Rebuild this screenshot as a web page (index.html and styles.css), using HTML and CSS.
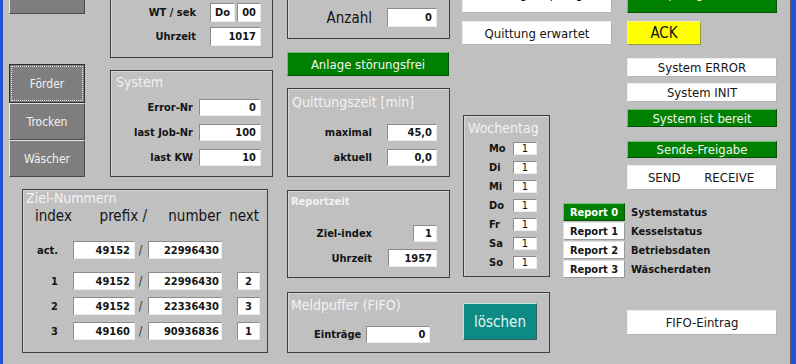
FILE: index.html
```html
<!DOCTYPE html>
<html lang="de">
<head>
<meta charset="utf-8">
<title>Kommunikation</title>
<link rel="stylesheet" href="styles.css">
</head>
<body>
<div class="screen">
  <div class="col-left">
    <div class="left-top">
      <div class="nav">
        <div class="navbtn nav-top"></div>
        <div class="navbtn focus h39">Förder</div>
        <div class="navbtn h37">Trocken</div>
        <div class="navbtn h37">Wäscher</div>
      </div>
      <div class="stack">
        <div class="panel wt">
          <div class="row r19">
            <span class="lbl">WT / sek</span>
            <span class="fld w25 center">Do</span>
            <span class="fld w24 ml2">00</span>
          </div>
          <div class="row r19 mt5">
            <span class="lbl">Uhrzeit</span>
            <span class="fld w51">1017</span>
          </div>
        </div>
        <div class="panel system">
          <div class="ptitle">System</div>
          <div class="srow mt8"><span class="lbl">Error-Nr</span><span class="fld w62">0</span></div>
          <div class="srow mt8"><span class="lbl">last Job-Nr</span><span class="fld w62">100</span></div>
          <div class="srow mt8"><span class="lbl">last KW</span><span class="fld w62">10</span></div>
        </div>
      </div>
    </div>
    <div class="panel ziel">
      <div class="ptitle small14">Ziel-Nummern</div>
      <div class="zhead">
        <span class="zh-index">index</span>
        <span class="zh-prefix">prefix /</span>
        <span class="zh-number">number</span>
        <span class="zh-next">next</span>
      </div>
      <div class="zrow mt16">
        <span class="zlbl">act.</span>
        <span class="fld zpre">49152</span>
        <span class="zslash">/</span>
        <span class="fld znum">22996430</span>
      </div>
      <div class="zrow mt13">
        <span class="zlbl">1</span>
        <span class="fld zpre">49152</span>
        <span class="zslash">/</span>
        <span class="fld znum">22996430</span>
        <span class="fld znext center">2</span>
      </div>
      <div class="zrow mt7">
        <span class="zlbl">2</span>
        <span class="fld zpre">49152</span>
        <span class="zslash">/</span>
        <span class="fld znum">22336430</span>
        <span class="fld znext center">3</span>
      </div>
      <div class="zrow mt7">
        <span class="zlbl">3</span>
        <span class="fld zpre">49160</span>
        <span class="zslash">/</span>
        <span class="fld znum">90936836</span>
        <span class="fld znext center">1</span>
      </div>
    </div>
  </div>

  <div class="col-mid">
    <div class="mid-upper">
      <div class="c1">
        <div class="panel anzahl">
          <div class="row">
            <span class="lbl big">Anzahl</span>
            <span class="fld w50 h19">0</span>
          </div>
        </div>
        <div class="bar green anlage">Anlage störungsfrei</div>
        <div class="panel quitt">
          <div class="ptitle">Quittungszeit [min]</div>
          <div class="qrow mt13"><span class="lbl">maximal</span><span class="fld w50">45,0</span></div>
          <div class="qrow mt8"><span class="lbl">aktuell</span><span class="fld w50">0,0</span></div>
        </div>
        <div class="panel report">
          <div class="ptitle bold11">Reportzeit</div>
          <div class="rrow mt16"><span class="lbl">Ziel-index</span><span class="fld w24 h17">1</span></div>
          <div class="rrow mt7"><span class="lbl">Uhrzeit</span><span class="fld w49 h18">1957</span></div>
        </div>
      </div>

      <div class="c2">
        <div class="top-row">
          <div class="tstack">
            <div class="box white cut"><span class="cut-txt">Quittung empfangen</span></div>
            <div class="box white h24 mt8">Quittung erwartet</div>
          </div>
          <div class="tstack ml15">
            <div class="box green cut"><span class="cut-txt">Report gesendet</span></div>
            <div class="box yellow ack mt8">ACK</div>
          </div>
        </div>
        <div class="lower">
          <div class="panel woche">
            <div class="ptitle">Wochentag</div>
            <div class="wrows">
              <div class="wrow"><span class="wl">Mo</span><span class="fld wbox">1</span></div>
              <div class="wrow"><span class="wl">Di</span><span class="fld wbox">1</span></div>
              <div class="wrow"><span class="wl">Mi</span><span class="fld wbox">1</span></div>
              <div class="wrow"><span class="wl">Do</span><span class="fld wbox">1</span></div>
              <div class="wrow"><span class="wl">Fr</span><span class="fld wbox">1</span></div>
              <div class="wrow"><span class="wl">Sa</span><span class="fld wbox">1</span></div>
              <div class="wrow"><span class="wl">So</span><span class="fld wbox">1</span></div>
            </div>
          </div>
          <div class="rcol">
            <div class="status">
              <div class="box white h19">System ERROR</div>
              <div class="box white h19 mt6">System INIT</div>
              <div class="box green h18 mt7">System ist bereit</div>
              <div class="box green h17 mt14">Sende-Freigabe</div>
              <div class="box white sendrecv mt7"><span>SEND</span><span>RECEIVE</span></div>
            </div>
            <div class="reports">
              <div class="rep"><span class="rbtn on">Report 0</span><span class="rlbl">Systemstatus</span></div>
              <div class="rep"><span class="rbtn">Report 1</span><span class="rlbl">Kesselstatus</span></div>
              <div class="rep"><span class="rbtn">Report 2</span><span class="rlbl">Betriebsdaten</span></div>
              <div class="rep"><span class="rbtn">Report 3</span><span class="rlbl">Wäscherdaten</span></div>
            </div>
          </div>
        </div>
      </div>
    </div>

    <div class="mid-lower">
      <div class="panel meld">
        <div class="meld-left">
          <div class="ptitle">Meldpuffer (FIFO)</div>
          <div class="erow"><span class="lbl">Einträge</span><span class="fld w64 h17">0</span></div>
        </div>
        <div class="loeschen">löschen</div>
      </div>
      <div class="box white fifo">FIFO-Eintrag</div>
    </div>
  </div>
</div>
</body>
</html>
```
FILE: styles.css
```css
* { box-sizing: border-box; }
html, body { margin: 0; padding: 0; }
body {
  width: 796px;
  height: 364px;
  overflow: hidden;
  background: #c0c0c0;
  font-family: "DejaVu Sans Condensed", "Liberation Sans", sans-serif;
  color: #141414;
}
.screen {
  display: flex;
  width: 796px;
  height: 364px;
  overflow: hidden;
  background: #c0c0c0;
  border-left: 3px solid #2350d4;
  border-right: 5px solid #2350d4;
  box-shadow: inset -1px 0 0 #5a5a5a;
}

/* generic */
.mt5 { margin-top: 5px; }
.mt6 { margin-top: 6px; }
.mt7 { margin-top: 7px; }
.mt8 { margin-top: 8px; }
.mt13 { margin-top: 13px; }
.mt14 { margin-top: 14px; }
.mt16 { margin-top: 16px; }
.ml2 { margin-left: 2px; }
.ml15 { margin-left: 15px; }

.panel {
  border: 1px solid #3e3e3e;
  box-shadow: inset 1px 1px 0 #d6d6d6;
}
.ptitle {
  color: #f2f2f2;
  font-size: 14px;
  line-height: 18px;
  padding-left: 4px;
  padding-top: 2px;
  white-space: nowrap;
}
.ptitle.small14 { font-size: 14px; line-height: 15px; padding-top: 1px; padding-left: 3px; }
.ptitle.bold11 { font-size: 11px; font-weight: bold; line-height: 13px; padding-top: 4px; padding-left: 3px; }

.lbl {
  font-size: 11px;
  font-weight: bold;
  white-space: nowrap;
}
.lbl.big { font-size: 15px; font-weight: normal; }

.fld {
  display: flex;
  align-items: center;
  justify-content: flex-end;
  background: #ffffff;
  border-top: 1px solid #8c8c8c;
  border-left: 1px solid #8c8c8c;
  border-right: 1px solid #ececec;
  border-bottom: 1px solid #ececec;
  font-size: 11px;
  font-weight: bold;
  padding-right: 4px;
  height: 17px;
}
.fld.center { justify-content: center; padding-right: 0; }
.w24 { width: 24px; }
.w25 { width: 25px; }
.w49 { width: 49px; }
.w50 { width: 50px; }
.w51 { width: 51px; }
.w62 { width: 62px; }
.w64 { width: 64px; }
.h17 { height: 17px; }
.h18 { height: 18px; }
.h19 { height: 19px; }
.h24 { height: 24px; }

/* left column */
.col-left { width: 277px; flex: none; display: flex; flex-direction: column; }
.left-top { display: flex; }
.nav {
  margin-left: 6px;
  width: 76px;
  margin-top: -23px;
  display: flex;
  flex-direction: column;
}
.navbtn {
  background: #7e7e7e;
  border-top: 1px solid #e4e4e4;
  border-left: 1px solid #e4e4e4;
  border-right: 1px solid #4a4a4a;
  border-bottom: 1px solid #4a4a4a;
  color: #f2f2f2;
  font-size: 12px;
  display: flex;
  align-items: center;
  justify-content: center;
}
.nav-top { height: 37px; margin-bottom: 50px; }
.navbtn.focus {
  border: 1px solid #2e2e2e;
  outline: 1px dotted #e8e8e8;
  outline-offset: -3px;
}
.h39 { height: 39px; }
.h37 { height: 37px; }

.stack { margin-left: 25px; width: 163px; display: flex; flex-direction: column; }
.row { display: flex; align-items: center; justify-content: flex-end; }
.panel.wt {
  margin-top: -10px;
  height: 68px;
  padding: 12px 11px 0 0;
}
.wt .lbl { margin-right: 14px; }
.r19 { height: 19px; }
.wt .fld { height: 19px; }

.panel.system { margin-top: 12px; height: 107px; padding-right: 11px; }
.system .ptitle { padding-left: 5px; padding-top: 2px; }
.srow { display: flex; align-items: center; justify-content: flex-end; height: 17px; }
.srow .lbl { margin-right: 6px; }

.panel.ziel {
  margin-left: 19px;
  margin-top: 12px;
  width: 246px;
  height: 164px;
}
.zhead {
  display: grid;
  grid-template-columns: 67px 57px 75px 40px;
  font-size: 15px;
  line-height: 18px;
  margin-top: 1px;
  white-space: nowrap;
}
.zh-index { padding-left: 12px; }
.zh-prefix { text-align: right; }
.zh-number { text-align: right; padding-right: 1px; }
.zh-next { text-align: right; padding-right: 3px; }
.zrow {
  display: grid;
  grid-template-columns: 35px 77px 13px 74px 38px;
  align-items: center;
  height: 18px;
}
.zrow .fld { height: 18px; }
.zlbl { font-size: 11px; font-weight: bold; text-align: right; }
.zpre { grid-column: 2; margin-left: 15px; width: 62px; }
.zslash { grid-column: 3; text-align: center; font-size: 12px; color: #333; padding-right: 2px; }
.znum { grid-column: 4; padding-right: 2px; }
.znext { grid-column: 5; margin-left: 15px; width: 23px; }

/* middle */
.col-mid { margin-left: 7px; width: 490px; flex: none; display: flex; flex-direction: column; }
.mid-upper { display: flex; height: 278px; }
.c1 { width: 163px; display: flex; flex-direction: column; flex: none; }
.panel.anzahl { margin-top: -12px; height: 51px; padding: 19px 12px 0 0; }
.anzahl .lbl { margin-right: 15px; }

.bar {
  display: flex;
  align-items: center;
  justify-content: center;
  font-size: 13px;
}
.green {
  background: #008000;
  color: #f4f4f4;
  border-top: 1px solid #6cc46c;
  border-left: 1px solid #6cc46c;
  border-right: 1px solid #0b4f0b;
  border-bottom: 1px solid #0b4f0b;
}
.anlage { margin-top: 13px; height: 24px; width: 162px; }

.panel.quitt { margin-top: 12px; height: 89px; padding-right: 12px; }
.quitt .ptitle { padding-top: 4px; }
.qrow { display: flex; align-items: center; justify-content: flex-end; height: 17px; }
.qrow .fld { height: 17px; }
.qrow .lbl { margin-right: 15px; }

.panel.report { margin-top: 13px; height: 88px; padding-right: 12px; }
.rrow { display: flex; align-items: center; height: 18px; }
.rrow .lbl { width: 84px; text-align: right; margin-right: 16px; }
.rrow .fld { margin-left: auto; }

.c2 { margin-left: 12px; width: 315px; display: flex; flex-direction: column; flex: none; }
.top-row { display: flex; }
.tstack { width: 150px; display: flex; flex-direction: column; }
.box {
  display: flex;
  align-items: center;
  justify-content: center;
  font-size: 13px;
  white-space: nowrap;
}
.white {
  background: #ffffff;
  border: 1px solid #ededed;
  border-bottom-color: #b4b4b4;
  border-right-color: #b4b4b4;
}
.yellow {
  background: #ffff00;
  border: 1px solid #f4f4a0;
  border-bottom-color: #9a9a40;
  border-right-color: #9a9a40;
}
.box.cut {
  height: 13px;
  align-items: flex-start;
  overflow: hidden;
  border-top: none;
}
.cut-txt { display: block; line-height: 13px; margin-top: -13px; }
.box.ack { width: 74px; height: 24px; font-size: 15px; }
.lower { display: flex; }
.panel.woche { margin-left: 1px; margin-top: 70px; width: 87px; height: 162px; flex: none; }
.woche .ptitle { padding-left: 4px; padding-top: 3px; }
.wrows { display: flex; flex-direction: column; gap: 6px; margin-top: 5px; }
.wrow { display: flex; align-items: center; height: 13px; }
.wl { width: 49px; padding-left: 25px; font-size: 11px; font-weight: bold; }
.wbox { width: 24px; height: 13px; justify-content: center; padding-right: 0; font-weight: normal; }

.rcol { margin-left: 13px; width: 214px; display: flex; flex-direction: column; }
.status { margin-left: 64px; width: 150px; margin-top: 13px; display: flex; flex-direction: column; }
.sendrecv { height: 25px; justify-content: space-around; padding: 0 10px 0 8px; }
.reports { margin-top: 13px; display: flex; flex-direction: column; gap: 1px; }
.rep { display: flex; align-items: center; height: 18px; }
.rbtn {
  width: 62px;
  height: 18px;
  display: flex;
  align-items: center;
  justify-content: center;
  font-size: 11px;
  font-weight: bold;
  background: #ffffff;
  color: #141414;
  border: 1px solid #e2e2e2;
  border-bottom-color: #9a9a9a;
  border-right-color: #9a9a9a;
}
.rbtn.on {
  background: #008000;
  color: #ffffff;
  border-color: #6cc46c #0b4f0b #0b4f0b #6cc46c;
}
.rlbl { margin-left: 6px; font-size: 11px; font-weight: bold; }

.mid-lower { display: flex; margin-top: 14px; }
.panel.meld { width: 263px; height: 61px; display: flex; flex: none; }
.meld-left { display: flex; flex-direction: column; }
.meld .ptitle { padding-top: 3px; padding-left: 3px; }
.erow { display: flex; align-items: center; margin-top: 12px; padding-left: 26px; }
.erow .lbl { margin-right: 5px; }
.loeschen {
  margin-left: auto;
  margin-right: 12px;
  margin-top: 10px;
  width: 74px;
  height: 37px;
  background: #0c8a84;
  color: #e6f4f4;
  font-size: 15px;
  display: flex;
  align-items: center;
  justify-content: center;
  border-top: 1px solid #b8e8e6;
  border-left: 1px solid #b8e8e6;
  border-right: 1px solid #3b5d5b;
  border-bottom: 1px solid #3b5d5b;
}
.fifo { margin-left: 77px; margin-top: 18px; width: 150px; height: 25px; }
```
